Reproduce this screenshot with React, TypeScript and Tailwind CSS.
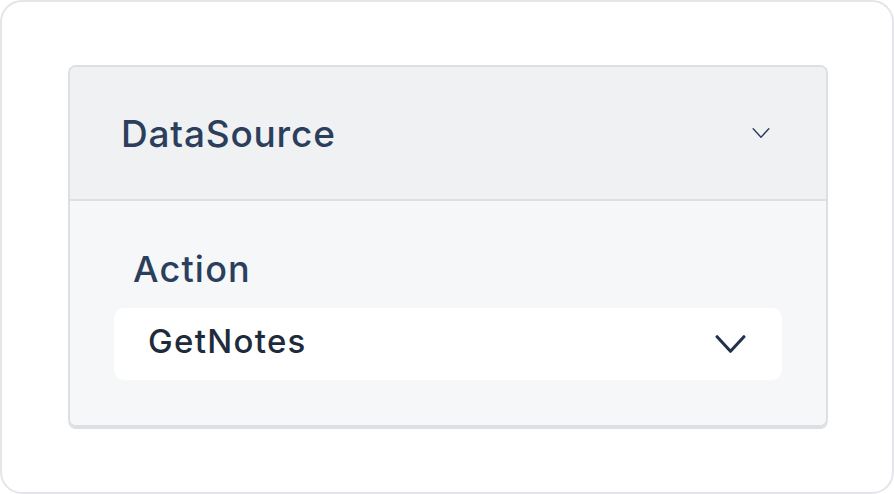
import React from "react";

function Chevron({ className, strokeWidth }: { className: string; strokeWidth: number }) {
  return (
    <svg viewBox="0 0 30 20" className={className} fill="none">
      <path d="M2 3 L15 17 L28 3" stroke="currentColor" strokeWidth={strokeWidth} strokeLinecap="round" strokeLinejoin="round" />
    </svg>
  );
}

export default function App() {
  return (
    <div className="w-[894px] h-[494px] bg-white" style={{ fontFamily: "Inter, 'Noto Sans', sans-serif" }}>
      <div className="w-full h-full rounded-[22px] border-2 border-[#e3e5e8] bg-white pt-[63px] pl-[66px] pr-[64px]">
        <div className="w-[760px] rounded-[8px] border-2 border-[#dcdfe4] shadow-[0_2px_0_#dcdfe4] overflow-hidden">
          <div className="h-[134px] bg-[#f0f1f3] border-b-2 border-[#dcdfe4] flex items-center justify-between pl-[51px] pr-[56px]">
            <span className="text-[37px] leading-none font-medium text-[#2b3f5c] tracking-[0.8px]">DataSource</span>
            <Chevron className="w-[18px] h-[12px] text-[#2b3f5c]" strokeWidth={2.4} />
          </div>
          <div className="bg-[#f6f7f9] px-[44px] pt-[50px] pb-[45px]">
            <div className="pl-[19px] text-[36px] leading-none font-medium text-[#2b3f5c] tracking-[1.2px] mb-[21px]">Action</div>
            <div className="h-[72px] rounded-[10px] bg-white flex items-center justify-between pl-[34px] pr-[36px]">
              <span className="text-[33px] leading-none font-medium text-[#1e2b3c] tracking-[1.3px] pb-[5px]">GetNotes</span>
              <Chevron className="w-[31px] h-[22px] text-[#22324a]" strokeWidth={3} />
            </div>
          </div>
        </div>
      </div>
    </div>
  );
}
